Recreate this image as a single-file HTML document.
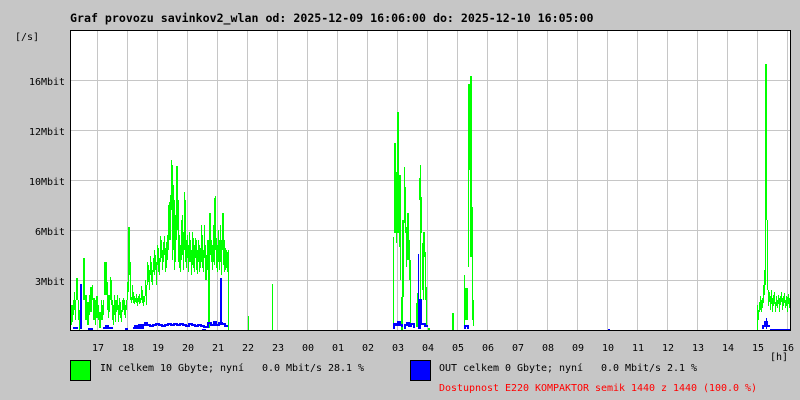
<!DOCTYPE html>
<html><head><meta charset="utf-8"><style>
html,body{margin:0;padding:0;background:#c6c6c6}
svg{display:block}
text{font-family:"DejaVu Sans Mono","Liberation Mono",monospace;font-size:10px;letter-spacing:-0.02px;white-space:pre;fill:#000}
.t{font-weight:bold;font-size:11.6px;letter-spacing:0}
.r{fill:#f00}
</style></head><body>
<svg width="800" height="400" viewBox="0 0 800 400" xmlns="http://www.w3.org/2000/svg">
<rect width="800" height="400" fill="#c6c6c6"/>
<rect x="70" y="30" width="720" height="300" fill="#fff"/>
<g stroke="#c6c6c6" stroke-width="1" shape-rendering="crispEdges">
<path d="M71 80.5H790M71 130.5H790M71 180.5H790M71 230.5H790M71 280.5H790"/>
<path d="M97.5 31V330M127.5 31V330M157.5 31V330M187.5 31V330M217.5 31V330M247.5 31V330M277.5 31V330M307.5 31V330M337.5 31V330M367.5 31V330M397.5 31V330M427.5 31V330M457.5 31V330M487.5 31V330M517.5 31V330M547.5 31V330M577.5 31V330M607.5 31V330M637.5 31V330M667.5 31V330M697.5 31V330M727.5 31V330M757.5 31V330M787.5 31V330"/>
</g>
<g fill="none" stroke="#00ff00" stroke-width="1" shape-rendering="crispEdges">
<path d="M71.5 325V305M72.5 322V305M73.5 315V300M74.5 310V292M75.5 320V300M76.5 300V278M77.5 300V278M78.5 320V300M79.5 330V310M83.5 300V258M84.5 300V258M85.5 320V295M86.5 320V295M87.5 325V302M88.5 325V302M89.5 315V295M90.5 312V287M91.5 312V287M92.5 300V285M93.5 320V298M94.5 320V298M95.5 325V300M96.5 318V296M97.5 318V296M98.5 320V305M99.5 328V312M100.5 328V312M101.5 320V300M102.5 320V305M103.5 315V300M104.5 295V262M105.5 295V262M106.5 295V262M107.5 310V282M108.5 318V295M109.5 312V295M110.5 300V277M111.5 305V280M112.5 320V300M113.5 325V305M114.5 315V295M115.5 322V300M116.5 312V300M117.5 310V295M118.5 322V305M119.5 315V298M120.5 318V302M121.5 322V310M122.5 312V300M123.5 310V298M124.5 315V300M125.5 318V305M126.5 310V300M127.5 300V282M128.5 292V227M129.5 275V227M130.5 300V262M131.5 303V297M132.5 300V285M133.5 303V292M134.5 304V296M135.5 302V298M136.5 303V294M137.5 306V298M138.5 302V296M139.5 304V294M140.5 303V298M141.5 300V286M142.5 303V290M143.5 306V296M144.5 302V296M145.5 296V280M146.5 305V285M147.5 285V262M148.5 282V265M149.5 290V270M150.5 275V256M151.5 282V262M152.5 285V270M153.5 272V258M154.5 275V250M155.5 270V255M156.5 285V262M157.5 265V245M158.5 272V248M159.5 275V258M160.5 262V236M161.5 258V240M162.5 270V250M163.5 262V242M164.5 255V236M165.5 272V248M166.5 268V242M167.5 260V235M168.5 250V205M169.5 240V202M170.5 240V195M171.5 210V160M172.5 260V165M173.5 250V185M174.5 270V200M175.5 262V215M176.5 240V166M177.5 230V166M178.5 262V200M179.5 268V235M180.5 272V245M181.5 260V220M182.5 255V215M183.5 270V232M184.5 250V192M185.5 262V200M186.5 268V240M187.5 258V235M188.5 272V245M189.5 262V232M190.5 262V240M191.5 275V250M192.5 265V232M193.5 268V238M194.5 272V245M195.5 258V238M196.5 270V240M197.5 274V250M198.5 262V240M199.5 272V245M200.5 268V248M201.5 262V225M202.5 268V235M203.5 272V250M204.5 258V225M205.5 280V245M206.5 280V255M207.5 270V240M208.5 328V240M209.5 328V213M210.5 255V213M211.5 262V240M212.5 270V245M213.5 262V225M214.5 265V198M215.5 250V196M216.5 268V238M217.5 272V245M218.5 262V230M219.5 270V240M220.5 262V225M221.5 275V240M222.5 250V213M223.5 265V213M224.5 272V240M225.5 270V248M226.5 268V250M227.5 272V252M228.5 330V250"/>
<path d="M248.5 330V316M272.5 330V284"/>
<path d="M393.5 327V237M394.5 233V143M395.5 233V143M396.5 243V172M397.5 233V112M398.5 233V112M399.5 247V175M400.5 280V175M401.5 330V297M402.5 330V220M403.5 297V220M404.5 223V167M405.5 233V187M406.5 267V227M407.5 260V213M408.5 260V213M409.5 280V240M410.5 327V260"/>
<path d="M416.5 327V303M417.5 327V293M418.5 300V270M419.5 200V178M420.5 307V165M421.5 233V197M422.5 290V243M423.5 300V232M424.5 257V232M425.5 300V252M426.5 327V287M428.5 330V328M429.5 330V328"/>
<path d="M452.5 330V313M453.5 330V313"/>
<path d="M464.5 327V275M465.5 320V288M466.5 320V288M467.5 320V288M468.5 267V84M469.5 170V84M470.5 257V76M471.5 257V76M472.5 320V207M473.5 326V300"/>
<path d="M757.5 330V305M758.5 320V310M759.5 312V302M760.5 310V296M761.5 312V300M762.5 308V298M763.5 303V285M764.5 295V270M765.5 285V64M766.5 220V64M767.5 290V220M768.5 306V290M769.5 302V292M770.5 310V296M771.5 304V290M772.5 312V298M773.5 306V295M774.5 304V292M775.5 312V302M776.5 306V296M777.5 308V300M778.5 304V295M779.5 312V298M780.5 305V296M781.5 302V292M782.5 310V298M783.5 306V296M784.5 303V293M785.5 308V300M786.5 306V296M787.5 312V297M788.5 304V294M789.5 308V298"/>
</g>
<g fill="none" stroke="#0000ff" stroke-width="2" shape-rendering="crispEdges">
<path d="M73 328H78M88 329H93M103 328H106V326H108V328H113M125 329H128M133 328H135V326H137V328H139V325H141V328H143V325H145V323H147V325H150V326H153V325H156V324H159V325H162V326H165V325H168V324H171V325H174V324H177V325H180V324H183V325H186V326H189V324H192V325H195V326H198V325H201V326H204V327H208V323H211V325H214V322H216V325H219V323H222V324H225V326H228"/>
<path d="M81 284V329M221 278V325"/>
<path d="M394 329V324H396V325H398V322H400V325H402V327M405 329V325H407V323H409V326H411V324H414V328"/>
<path stroke-width="1" d="M418.5 329V254"/>
<path d="M420 329V300H421V324H425V326H428M465 329V326H468V329M763 329V326H765V322H767V326H770"/>
<path stroke-width="1" d="M766.5 329V318M770 329.5H790M608 329.5H610M202 329.5H206"/>
</g>
<g fill="#000" shape-rendering="crispEdges">
<rect x="70" y="30" width="720" height="1"/>
<rect x="70" y="30" width="1" height="301"/>
<rect x="70" y="330" width="721" height="1"/>
<rect x="790" y="30" width="1" height="301"/>
</g>
<text class="t" x="70" y="22">Graf provozu savinkov2_wlan od: 2025-12-09 16:06:00 do: 2025-12-10 16:05:00</text>
<text x="15" y="40">[/s]</text>
<text x="29" y="85">16Mbit</text>
<text x="29" y="135">12Mbit</text>
<text x="29" y="185">10Mbit</text>
<text x="35" y="235">6Mbit</text>
<text x="35" y="285">3Mbit</text>
<text x="92" y="351">17</text>
<text x="122" y="351">18</text>
<text x="152" y="351">19</text>
<text x="182" y="351">20</text>
<text x="212" y="351">21</text>
<text x="242" y="351">22</text>
<text x="272" y="351">23</text>
<text x="302" y="351">00</text>
<text x="332" y="351">01</text>
<text x="362" y="351">02</text>
<text x="392" y="351">03</text>
<text x="422" y="351">04</text>
<text x="452" y="351">05</text>
<text x="482" y="351">06</text>
<text x="512" y="351">07</text>
<text x="542" y="351">08</text>
<text x="572" y="351">09</text>
<text x="602" y="351">10</text>
<text x="632" y="351">11</text>
<text x="662" y="351">12</text>
<text x="692" y="351">13</text>
<text x="722" y="351">14</text>
<text x="752" y="351">15</text>
<text x="782" y="351">16</text>
<text x="770" y="360">[h]</text>
<rect x="70.5" y="360.5" width="20" height="20" fill="#00ff00" stroke="#000" shape-rendering="crispEdges"/>
<rect x="410.5" y="360.5" width="20" height="20" fill="#0000ff" stroke="#000" shape-rendering="crispEdges"/>
<text x="100" y="371">IN celkem 10 Gbyte; nyní   0.0 Mbit/s 28.1 %</text>
<text x="439" y="371">OUT celkem 0 Gbyte; nyní   0.0 Mbit/s 2.1 %</text>
<text class="r" x="439" y="391">Dostupnost E220 KOMPAKTOR semik 1440 z 1440 (100.0 %)</text>
</svg>
</body></html>
